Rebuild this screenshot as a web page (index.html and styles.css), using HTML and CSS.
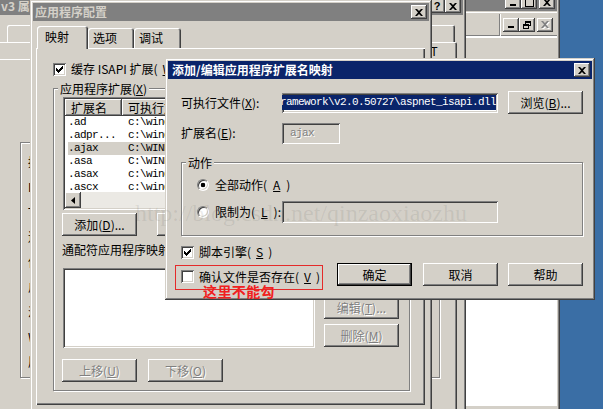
FILE: index.html
```html
<!DOCTYPE html>
<html lang="zh-CN">
<head>
  <meta charset="UTF-8">
  <title>添加/编辑应用程序扩展名映射</title>
  <link rel="stylesheet" href="styles.css">
</head>
<body>

  <!-- IIS 管理器（最底层） -->
  <div class="win iis">
    <div class="cap">
      <span class="cap-title">Internet 信息服务(IIS)管理器</span>
      <span class="cbtn"><svg width="8" height="7" viewBox="0 0 8 7"><rect x="1" y="5" width="6" height="2"/></svg></span>
      <span class="cbtn"><svg width="9" height="9" viewBox="0 0 9 9"><path fill-rule="evenodd" d="M0 0h9v9H0z M1 2v6h7V2z"/></svg></span>
      <span class="cbtn sp"><svg width="8" height="7" viewBox="0 0 8 7"><path d="M0 0h2l2 2 2-2h2L5 3.5 8 7H6L4 5 2 7H0l3-3.5z"/></svg></span>
    </div>
    <div class="iis-menu">
      <span class="msep"></span>
      <span class="cbtn"><svg width="8" height="7" viewBox="0 0 8 7"><rect x="1" y="5" width="6" height="2"/></svg></span>
      <span class="cbtn"><svg width="8" height="8" viewBox="0 0 8 8" shape-rendering="crispEdges"><rect x="2" y="0" width="6" height="2"/><rect x="7" y="2" width="1" height="3"/><rect x="6" y="4" width="1" height="1"/><rect x="2" y="2" width="1" height="1"/><rect x="0" y="3" width="6" height="2"/><rect x="0" y="5" width="1" height="3"/><rect x="5" y="5" width="1" height="3"/><rect x="0" y="7" width="6" height="1"/></svg></span>
      <span class="cbtn sp off"><svg width="8" height="7" viewBox="0 0 8 7"><path d="M0 0h2l2 2 2-2h2L5 3.5 8 7H6L4 5 2 7H0l3-3.5z"/></svg></span>
    </div>
    <div class="iis-tool"></div>
    <div class="iis-main"></div>
    <div class="iis-status"></div>
  </div>

  <!-- 网站属性 -->
  <div class="win prop">
    <div class="cap">
      <span class="cap-title">v3 属性</span>
      <span class="cbtn help">?</span>
      <span class="cbtn"><svg width="8" height="7" viewBox="0 0 8 7"><path d="M0 0h2l2 2 2-2h2L5 3.5 8 7H6L4 5 2 7H0l3-3.5z"/></svg></span>
    </div>
    <div class="ptabs back">
      <span class="ptab">网站</span><span class="ptab">性能</span><span class="ptab">ISAPI 筛选器</span><span class="ptab">主目录</span><span class="ptab">文档</span>
    </div>
    <div class="ptabs front">
      <span class="ptab wide">目录安全性</span><span class="ptab">HTTP 头</span><span class="ptab">自定义错误</span><span class="ptab">ASP.NET</span>
    </div>
    <div class="ppanel">
      <div class="group pgroup">
        <span class="plabel">描述(S):</span>
        <span class="plabel">IP 地址(I):</span>
        <span class="plabel">TCP 端口(T):</span>
        <span class="plabel">连接超时(N):</span>
        <span class="plabel">保持 HTTP 连接(K)</span>
        <span class="plabel">启用日志记录(E)</span>
        <span class="plabel">活动日志格式(V):</span>
        <span class="plabel">W3C 扩展日志文件格式</span>
        <span class="plabel">属性(P)...</span>
      </div>
    </div>
  </div>

  <!-- 应用程序配置 -->
  <div class="win app">
    <div class="cap">
      <span class="cap-title">应用程序配置</span>
      <span class="cbtn"><svg width="8" height="7" viewBox="0 0 8 7"><path d="M0 0h2l2 2 2-2h2L5 3.5 8 7H6L4 5 2 7H0l3-3.5z"/></svg></span>
    </div>
    <div class="tabs">
      <span class="tab sel">映射</span><span class="tab t2">选项</span><span class="tab t3">调试</span>
    </div>
    <div class="panel">
      <div class="chkrow">
        <span class="chk"><svg width="7" height="7" viewBox="0 0 7 7" shape-rendering="crispEdges"><rect x="6" y="0" width="1" height="3"/><rect x="5" y="1" width="1" height="3"/><rect x="4" y="2" width="1" height="3"/><rect x="3" y="3" width="1" height="3"/><rect x="2" y="4" width="1" height="3"/><rect x="1" y="3" width="1" height="3"/><rect x="0" y="2" width="1" height="3"/></svg></span>
        缓存 ISAPI 扩展(<u>W</u>)
      </div>
      <div class="group agroup">
        <span class="gtitle">应用程序扩展(<u>X</u>)</span>
        <div class="lv">
          <div class="lv-head"><span>扩展名</span><span>可执行文件路径</span><span>谓词</span></div>
          <div class="lv-rows">
            <div class="lv-row"><span>.ad</span><span>c:\windows\microsoft.net\framework\v2.0.50727\aspnet_isapi.dll</span></div>
            <div class="lv-row"><span>.adpr...</span><span>c:\windows\microsoft.net\framework\v2.0.50727\aspnet_isapi.dll</span></div>
            <div class="lv-row cur"><span>.ajax</span><span>C:\WINDOWS\Microsoft.NET\Framework\v2.0.50727\aspnet_isapi.dll</span></div>
            <div class="lv-row"><span>.asa</span><span>C:\WINDOWS\system32\inetsrv\asp.dll</span></div>
            <div class="lv-row"><span>.asax</span><span>c:\windows\microsoft.net\framework\v2.0.50727\aspnet_isapi.dll</span></div>
            <div class="lv-row"><span>.ascx</span><span>c:\windows\microsoft.net\framework\v2.0.50727\aspnet_isapi.dll</span></div>
          </div>
          <div class="hscroll">
            <span class="sbtn"><svg width="4" height="7" viewBox="0 0 4 7"><path d="M4 0v7L0 3.5z"/></svg></span>
            <span class="strack"></span>
          </div>
        </div>
        <div class="btnrow">
          <span class="btn">添加(<u>D</u>)...</span>
          <span class="btn">编辑(<u>E</u>)...</span>
          <span class="btn">删除(<u>R</u>)</span>
        </div>
        <div class="wlabel">通配符应用程序映射(执行顺序)(<u>M</u>):</div>
        <div class="wild">
          <div class="wlist"></div>
          <div class="wbtns">
            <span class="btn">插入(<u>N</u>)...</span>
            <span class="btn off">编辑(<u>T</u>)...</span>
            <span class="btn off">删除(<u>M</u>)</span>
          </div>
        </div>
        <div class="btnrow move">
          <span class="btn off">上移(<u>U</u>)</span>
          <span class="btn off">下移(<u>O</u>)</span>
        </div>
      </div>
    </div>
  </div>

  <!-- 添加/编辑应用程序扩展名映射（活动窗口） -->
  <div class="win map active">
    <div class="cap">
      <span class="cap-title">添加/编辑应用程序扩展名映射</span>
      <span class="cbtn"><svg width="8" height="7" viewBox="0 0 8 7"><path d="M0 0h2l2 2 2-2h2L5 3.5 8 7H6L4 5 2 7H0l3-3.5z"/></svg></span>
    </div>
    <div class="map-body">
      <div class="frow">
        <span>可执行文件(<u>X</u>):</span>
        <span class="edit exe"><span class="seltext">C:\WINDOWS\Microsoft.NET\Framework\v2.0.50727\aspnet_isapi.dll</span></span>
        <span class="btn">浏览(<u>B</u>)...</span>
      </div>
      <div class="frow r2">
        <span>扩展名(<u>E</u>):</span>
        <span class="edit ext dis">ajax</span>
      </div>
      <div class="group act">
        <span class="gtitle">动作</span>
        <div class="opt o1"><span class="radio on"></span>全部动作(<u>A</u>)</div>
        <div class="o2">
          <span class="opt"><span class="radio"></span>限制为(<u>L</u>):</span>
          <span class="edit lim dis"></span>
        </div>
      </div>
      <div class="chkrow eng">
        <span class="chk"><svg width="7" height="7" viewBox="0 0 7 7" shape-rendering="crispEdges"><rect x="6" y="0" width="1" height="3"/><rect x="5" y="1" width="1" height="3"/><rect x="4" y="2" width="1" height="3"/><rect x="3" y="3" width="1" height="3"/><rect x="2" y="4" width="1" height="3"/><rect x="1" y="3" width="1" height="3"/><rect x="0" y="2" width="1" height="3"/></svg></span>
        脚本引擎(<u>S</u>)
      </div>
      <div class="foot">
        <div class="chkrow verify"><span class="chk"></span>确认文件是否存在(<u>V</u>)</div>
        <span class="btn def">确定</span>
        <span class="btn b2">取消</span>
        <span class="btn b3">帮助</span>
      </div>
    </div>
  </div>

  <div class="redbox"></div>
  <div class="note">这里不能勾</div>
  <div class="mark">http://blog.csdn.net/qinzaoxiaozhu</div>

</body>
</html>
```

FILE: styles.css
```css
* {
  box-sizing: border-box;
}
body {
  margin: 0;
  width: 603px;
  height: 409px;
  overflow: hidden;
  position: relative;
  background: #3a6ea5;
  font: 12px/14px "Noto Sans CJK SC", sans-serif;
  color: #000;
}
u {
  text-decoration: underline;
  text-underline-offset: 1px;
}

/* ---- window frame ---- */
.win {
  position: absolute;
  display: flex;
  flex-direction: column;
  padding: 3px;
  background: #d4d0c8;
  box-shadow: inset -1px -1px #404040, inset 1px 1px #d4d0c8, inset -2px -2px #808080, inset 2px 2px #fff;
}
.cap {
  flex: none;
  height: 18px;
  display: flex;
  align-items: center;
  padding: 0 2px 0 2px;
  background: #808080;
  color: #d4d0c8;
  font-weight: bold;
  white-space: nowrap;
  overflow: hidden;
}
.cap-title {
  flex: 1;
}
.active .cap {
  background: #0a246a;
  color: #fff;
}
.cbtn {
  flex: none;
  width: 16px;
  height: 14px;
  display: flex;
  align-items: center;
  justify-content: center;
  background: #d4d0c8;
  color: #000;
  box-shadow: inset -1px -1px #404040, inset 1px 1px #fff, inset -2px -2px #808080;
}
.cbtn svg {
  fill: #000;
}
.cbtn.sp {
  margin-left: 2px;
}
.cbtn.off svg {
  fill: #808080;
  filter: drop-shadow(1px 1px 0 #fff);
}
.help {
  font: bold 11px/14px "Liberation Sans", sans-serif;
}

/* ---- common controls ---- */
.btn {
  flex: none;
  width: 75px;
  height: 23px;
  display: flex;
  align-items: center;
  justify-content: center;
  background: #d4d0c8;
  white-space: nowrap;
  box-shadow: inset -1px -1px #404040, inset 1px 1px #fff, inset -2px -2px #808080;
}
.btn.def {
  box-shadow: inset 0 0 0 1px #000, inset -2px -2px #404040, inset 2px 2px #fff, inset -3px -3px #808080;
}
.off {
  color: #808080;
  text-shadow: 1px 1px 0 #fff;
}
.chkrow {
  display: flex;
  align-items: center;
  gap: 5px;
  white-space: nowrap;
}
.chk {
  flex: none;
  width: 13px;
  height: 13px;
  display: flex;
  align-items: center;
  justify-content: center;
  background: #fff;
  box-shadow: inset 1px 1px #808080, inset -1px -1px #fff, inset 2px 2px #404040, inset -2px -2px #d4d0c8;
}
.radio {
  flex: none;
  width: 12px;
  height: 12px;
  border-radius: 50%;
  background: #fff;
  border: 1px solid;
  border-color: #808080 #fff #fff #808080;
  box-shadow: inset 1px 1px #404040, inset -1px -1px #d4d0c8;
}
.radio.on {
  background: radial-gradient(circle, #000 0 2px, #fff 2.6px);
}
.edit {
  height: 20px;
  display: flex;
  align-items: center;
  padding: 2px;
  overflow: hidden;
  white-space: nowrap;
  background: #fff;
  font: 11px/15px "Liberation Mono", monospace;
  letter-spacing: -0.6px;
  box-shadow: inset 1px 1px #808080, inset -1px -1px #fff, inset 2px 2px #404040, inset -2px -2px #d4d0c8;
}
.edit.dis {
  background: #d4d0c8;
  color: #808080;
  text-shadow: 1px 1px 0 #fff;
}
.group {
  border: 1px solid #808080;
  box-shadow: inset 1px 1px #fff, 1px 1px #fff;
}
.gtitle {
  display: block;
  width: max-content;
  margin-top: -7px;
  padding: 0 2px;
  line-height: 13px;
  background: #d4d0c8;
}

/* ---- IIS manager ---- */
.iis {
  left: -20px;
  top: -10px;
  width: 580px;
  height: 430px;
}
.iis-menu {
  flex: none;
  margin-top: 1px;
  height: 25px;
  display: flex;
  align-items: center;
  justify-content: flex-end;
  padding-right: 4px;
  box-shadow: inset 0 1px #fff, inset 0 -1px #fff, inset 0 -2px #808080;
}
.msep {
  width: 2px;
  height: 22px;
  margin-right: 2px;
  box-shadow: inset 1px 0 #808080, inset -1px 0 #fff;
}
.iis-tool {
  flex: none;
  height: 25px;
  box-shadow: inset 0 1px #fff, inset 0 -1px #808080;
}
.iis-main {
  flex: 1;
  background: #fff;
  box-shadow: inset 1px 1px #808080, inset 2px 2px #404040, inset -1px -1px #fff;
}
.iis-status {
  flex: none;
  height: 12px;
  box-shadow: inset 0 1px #fff;
}

/* ---- site properties ---- */
.prop {
  left: -6px;
  top: -6px;
  width: 472px;
  height: 430px;
}
.prop .cap-title {
  padding-left: 2px;
}
.ptabs {
  flex: none;
  display: flex;
  height: 17px;
}
.ptabs.back {
  margin: 10px 8px 0 10px;
}
.ptabs.front {
  margin-right: 6px;
}
.ptab {
  flex: 1;
  text-align: center;
  line-height: 17px;
  white-space: nowrap;
  border-radius: 2px 2px 0 0;
  box-shadow: inset 1px 1px #fff, inset -1px 0 #404040, inset -2px 0 #808080;
}
.ptab.wide {
  flex: 2.4;
}
.ppanel {
  flex: 1;
  margin: 0 6px 4px 0;
  padding: 83px 0 0 23px;
  box-shadow: inset 1px 1px #fff, inset -1px -1px #404040, inset -2px -2px #808080;
}
.pgroup {
  width: 420px;
  height: 236px;
  display: flex;
  flex-direction: column;
  gap: 11px;
  padding: 12px 0 0 7px;
}
.plabel {
  white-space: nowrap;
}

/* ---- application configuration ---- */
.app {
  left: 30px;
  top: 0;
  width: 402px;
  height: 420px;
}
.tabs {
  flex: none;
  display: flex;
  align-items: flex-end;
  height: 22px;
  margin: 5px 0 0 4px;
}
.tab {
  height: 20px;
  display: flex;
  align-items: center;
  padding-left: 5px;
  background: #d4d0c8;
  border-radius: 3px 3px 0 0;
  box-shadow: inset 1px 1px #fff, inset -1px 0 #404040, inset -2px 0 #808080;
}
.tab.sel {
  width: 51px;
  height: 23px;
  margin-bottom: -1px;
  padding: 0 0 2px 8px;
  position: relative;
  z-index: 1;
}
.tab.t2 {
  width: 46px;
}
.tab.t3 {
  width: 47px;
}
.panel {
  flex: none;
  height: 357px;
  margin: 0 4px 0 3px;
  padding: 14px 0 0 17px;
  box-shadow: inset 1px 1px #fff, inset -1px -1px #404040, inset -2px -2px #808080;
}
.panel > .chkrow {
  height: 14px;
}
.agroup {
  width: 357px;
  height: 303px;
  margin-top: 12px;
  padding: 0 10px 0 9px;
}
.agroup > .gtitle {
  margin-left: -5px;
}
.lv {
  margin-top: 2px;
  height: 113px;
  padding: 2px;
  display: flex;
  flex-direction: column;
  overflow: hidden;
  background: #fff;
  box-shadow: inset 1px 1px #808080, inset -1px -1px #fff, inset 2px 2px #404040, inset -2px -2px #d4d0c8;
}
.lv-head {
  flex: none;
  height: 17px;
  display: grid;
  grid-template-columns: 57px 190px 1fr;
}
.lv-head span {
  padding-left: 6px;
  line-height: 17px;
  white-space: nowrap;
  overflow: hidden;
  background: #d4d0c8;
  box-shadow: inset -1px -1px #404040, inset 1px 1px #fff, inset -2px -2px #808080;
}
.lv-rows {
  flex: 1;
  overflow: hidden;
  font: 11px/13px "Liberation Mono", monospace;
  letter-spacing: -0.6px;
}
.lv-row {
  height: 13px;
  display: grid;
  grid-template-columns: 57px 1fr;
  white-space: nowrap;
}
.lv-row span {
  overflow: hidden;
  padding-left: 6px;
}
.lv-row span:first-child {
  padding-left: 3px;
}
.lv-row.cur {
  background: linear-gradient(90deg, transparent 3px, #d4d0c8 3px);
}
.hscroll {
  flex: none;
  height: 16px;
  display: flex;
  background: #ebe9e4;
}
.sbtn {
  width: 16px;
  height: 16px;
  display: flex;
  align-items: center;
  justify-content: center;
  background: #d4d0c8;
  box-shadow: inset -1px -1px #404040, inset 1px 1px #fff, inset -2px -2px #808080;
}
.strack {
  flex: 1;
}
.btnrow {
  display: flex;
  gap: 20px;
  margin: 3px 0 0 -1px;
}
.btnrow.move {
  gap: 11px;
  margin-top: 11px;
}
.wlabel {
  margin: 7px 0 0 -1px;
  white-space: nowrap;
}
.wild {
  display: flex;
  gap: 9px;
  margin-top: 11px;
}
.wlist {
  width: 253px;
  height: 80px;
  background: #fff;
  box-shadow: inset 1px 1px #808080, inset -1px -1px #fff, inset 2px 2px #404040, inset -2px -2px #d4d0c8;
}
.wbtns {
  display: flex;
  flex-direction: column;
  gap: 5px;
}

/* ---- extension mapping dialog ---- */
.map {
  left: 165px;
  top: 58px;
  width: 430px;
  height: 242px;
}
.map .cap-title {
  padding-left: 2px;
}
.map-body {
  padding: 12px 9px 0 13px;
}
.frow {
  display: grid;
  grid-template-columns: 101px 216px 1fr;
  align-items: center;
  height: 23px;
  white-space: nowrap;
}
.frow .btn {
  justify-self: end;
}
.frow.r2 {
  margin-top: 8px;
  height: 22px;
}
.exe {
  justify-content: flex-end;
}
.seltext {
  flex: none;
  background: #0a246a;
  color: #fff;
}
.ext {
  width: 58px;
  height: 21px;
  padding-left: 8px;
}
.act {
  height: 74px;
  margin-top: 18px;
  padding-left: 15px;
}
.act > .gtitle {
  margin-left: -11px;
}
.opt {
  display: flex;
  align-items: center;
  gap: 6px;
  white-space: nowrap;
}
.o1 {
  height: 16px;
  margin-top: 8px;
}
.o2 {
  display: grid;
  grid-template-columns: 85px 216px;
  align-items: center;
  height: 22px;
  margin-top: 8px;
}
.lim {
  height: 22px;
}
.eng {
  height: 14px;
  margin-top: 9px;
}
.foot {
  display: flex;
  height: 23px;
  margin-top: 4px;
}
.verify {
  flex: 1;
  padding-top: 4px;
}
.b2 {
  margin-left: 11px;
}
.b3 {
  margin-left: 10px;
}

/* ---- annotations over the screenshot ---- */
.redbox {
  position: absolute;
  left: 175px;
  top: 265px;
  width: 148px;
  height: 25px;
  border: 1px solid #e42a2a;
}
.note {
  position: absolute;
  left: 203px;
  top: 283px;
  font: bold 14px/16px "Noto Sans CJK SC", sans-serif;
  color: #f02020;
  letter-spacing: 0.4px;
}
.mark {
  position: absolute;
  left: 135px;
  top: 201px;
  font: 24px/24px "Liberation Serif", serif;
  color: rgba(60, 60, 60, 0.1);
  white-space: nowrap;
  pointer-events: none;
}
```
